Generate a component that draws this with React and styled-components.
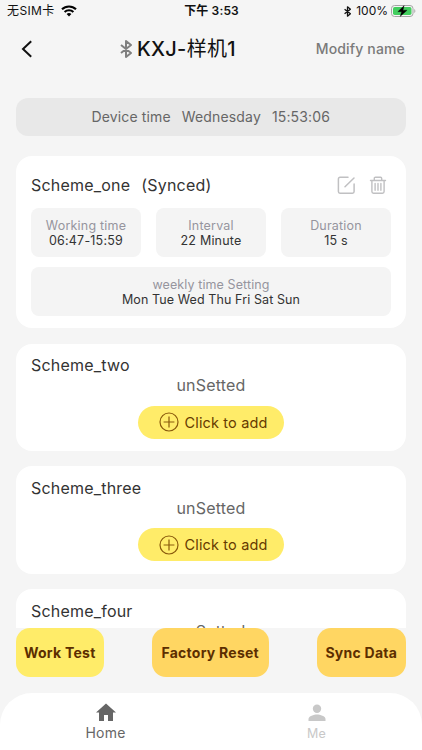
import styled, { createGlobalStyle } from 'styled-components';

const GlobalStyle = createGlobalStyle`
  * {
    box-sizing: border-box;
  }

  body {
    margin: 0;
    background: #f5f5f5;
    font-family: Inter, 'Noto Sans CJK SC', sans-serif;
  }

  button {
    font-family: inherit;
    border: 0;
    padding: 0;
    background: none;
  }
`;

const Screen = styled.div`
  display: flex;
  flex-direction: column;
  width: 422px;
  height: 750px;
  overflow: hidden;
  background: #f5f5f5;
`;

const StatusBar = styled.div`
  display: grid;
  grid-template-columns: 1fr auto 1fr;
  align-items: center;
  height: 22px;
  padding: 0 6px 0 7px;
  font-size: 12px;
  line-height: 22px;
  color: #111;
`;

const StatusGroup = styled.div`
  display: flex;
  align-items: center;
  justify-content: ${({ $end }) => ($end ? 'flex-end' : 'flex-start')};
  gap: ${({ $end }) => ($end ? '3px' : '6px')};
  letter-spacing: ${({ $end }) => ($end ? '0' : '0.4px')};

  svg:first-child {
    margin-right: 2px;
  }
`;

const Clock = styled.div`
  font-weight: 600;
  letter-spacing: 0.15px;
`;

const Header = styled.header`
  display: flex;
  align-items: center;
  justify-content: space-between;
  height: 54px;
  padding: 0 17px 0 20px;
`;

const BackButton = styled.button`
  display: flex;
  width: 20px;
`;

const DeviceName = styled.h1`
  display: flex;
  align-items: center;
  gap: 5px;
  margin: 0;
  font-size: 20px;
  font-weight: 500;
  line-height: 24px;
  letter-spacing: 0.3px;
  color: #111;
`;

const Regular = styled.span`
  font-weight: 400;
`;

const ModifyButton = styled.button`
  padding-bottom: 2px;
  font-size: 14px;
  font-weight: 500;
  letter-spacing: 0.15px;
  color: #7a7a7a;
`;

const DeviceTime = styled.div`
  display: flex;
  justify-content: center;
  align-items: center;
  gap: 11px;
  flex: none;
  height: 38px;
  margin: 22px 16px 20px 15.5px;
  padding-bottom: 2px;
  border-radius: 12px;
  background: #e8e8e8;
  font-size: 14px;
  letter-spacing: 0.15px;
  color: #666;
`;

const SchemeList = styled.main`
  display: flex;
  flex-direction: column;
  gap: 15.5px;
  height: 472px;
  flex: none;
  padding: 0 16px 0 15.5px;
  overflow: hidden;
`;

const Card = styled.section`
  flex: none;
  height: ${({ $synced }) => ($synced ? '172px' : '107.3px')};
  padding: ${({ $synced }) => ($synced ? '18px' : '10.5px')} 15px 0 15.5px;
  border-radius: 16px;
  background: #fff;
`;

const CardHead = styled.div`
  display: flex;
  align-items: center;
  justify-content: space-between;
  height: 22px;
`;

const SchemeName = styled.h2`
  display: flex;
  gap: 11px;
  margin: 0;
  font-size: 16px;
  font-weight: 400;
  line-height: 22px;
  letter-spacing: 0.2px;
  color: #333;
`;

const CardActions = styled.div`
  display: flex;
  gap: 13px;
  margin-right: 4px;
`;

const Stats = styled.div`
  display: grid;
  grid-template-columns: repeat(3, 1fr);
  gap: 10px 15px;
  margin-top: 12px;
`;

const Stat = styled.div`
  grid-column: ${({ $wide }) => ($wide ? '1 / -1' : 'auto')};
  height: 49px;
  padding-top: 9.5px;
  border-radius: 8px;
  background: #f4f4f4;
  text-align: center;
  font-size: 12.5px;
  line-height: 15.3px;
  letter-spacing: ${({ $wide }) => ($wide ? '0.1px' : '0.2px')};
`;

const StatLabel = styled.div`
  color: #96959e;
`;

const StatValue = styled.div`
  color: #333;
`;

const Unset = styled.div`
  height: 20px;
  text-align: center;
  font-size: 16px;
  line-height: 19px;
  letter-spacing: 0.2px;
  color: #666;
`;

const AddButton = styled.button`
  display: flex;
  align-items: center;
  justify-content: center;
  gap: 5px;
  width: 146px;
  height: 33px;
  margin: 9.5px auto 0;
  padding-left: 5px;
  border-radius: 17px;
  background: #ffec69;
  font-size: 14.5px;
  letter-spacing: 0.15px;
  color: #663a00;
`;

const Actions = styled.div`
  display: flex;
  justify-content: space-between;
  flex: none;
  height: 65px;
  padding: 0 16px 0 15.5px;
`;

const ActionButton = styled.button`
  width: ${({ $width }) => $width}px;
  height: 48.5px;
  border-radius: 14px;
  background: ${({ $light }) => ($light ? '#ffec69' : '#ffd662')};
  font-size: 14px;
  font-weight: 700;
  letter-spacing: 0.25px;
  color: #5c2e00;
`;

const TabBar = styled.nav`
  display: grid;
  grid-template-columns: 1fr 1fr;
  flex: 1;
  border-radius: 32px 32px 0 0;
  background: #fff;
`;

const Tab = styled.a`
  display: flex;
  flex-direction: column;
  align-items: center;
  padding-top: 7px;
  font-size: ${({ $active }) => ($active ? '14px' : '12.5px')};
  line-height: 17px;
  letter-spacing: 0.2px;
  color: ${({ $active }) => ($active ? '#666' : '#c8c8c8')};

  svg {
    margin-bottom: ${({ $active }) => ($active ? '0' : '1px')};
  }
`;

function BluetoothIcon({ width, height, color, strokeWidth }) {
  return (
    <svg width={width} height={height} viewBox="0 0 12 18" fill="none" stroke={color} strokeWidth={strokeWidth}>
      <path d="M1 5l10 8-5 4V1l5 4-10 8" strokeLinejoin="round" />
    </svg>
  );
}

function WifiIcon() {
  return (
    <svg width="16" height="12" viewBox="0 0 16 12" fill="none" stroke="#000" strokeWidth="2.1">
      <path d="M1 4.3a10 10 0 0 1 14 0M3.6 7a6.3 6.3 0 0 1 8.8 0" />
      <path d="M8 11.6L5.6 9.1a3.5 3.5 0 0 1 4.8 0z" fill="#000" stroke="none" />
    </svg>
  );
}

function BatteryIcon() {
  return (
    <svg width="25" height="12" viewBox="0 0 25 12">
      <rect x=".5" y=".5" width="21.5" height="11" rx="3" fill="none" stroke="#a5a5a5" />
      <rect x="2" y="2" width="18.5" height="8" rx="1.7" fill="#43ce5f" />
      <path d="M23.3 4v4c1.4-.5 1.4-3.5 0-4z" fill="#a5a5a5" />
      <path d="M13.2.5L6.8 6.7h3.8L9.2 11.5l6.900-6.300H12z" fill="#000" stroke="#000" strokeWidth=".3" />
    </svg>
  );
}

function EditIcon() {
  return (
    <svg width="19" height="19" viewBox="0 0 19 19" fill="none" stroke="#c0c0c2" strokeWidth="1.5" strokeLinecap="round">
      <path d="M11 1.3H3a1.6 1.6 0 0 0-1.6 1.6v12.700A1.600 1.600 0 0 0 3 17.200h12.500a1.600 1.600 0 0 0 1.600-1.600V8M8 10.800l9-8.800" />
    </svg>
  );
}

function TrashIcon() {
  return (
    <svg width="18" height="19" viewBox="0 0 18 19" fill="none" stroke="#c0c0c2" strokeWidth="1.4" strokeLinecap="round">
      <path d="M1.500 4.500h15M5.300 4.300V2.400c0-.7.4-1.100 1.100-1.100h5.200c.7 0 1.100.4 1.100 1.100v1.900M2.900 4.700v10.900c0 1 .6 1.600 1.600 1.600h9c1 0 1.600-.6 1.600-1.600V4.700M6.100 7.500v6.800M9 7.500v6.800M11.900 7.500v6.800" />
    </svg>
  );
}

function PlusIcon() {
  return (
    <svg width="20" height="20" viewBox="0 0 20 20" fill="none" stroke="#8a5a0c" strokeWidth="1.2">
      <circle cx="10" cy="10" r="9" />
      <path d="M10 4.6v10.8M4.6 10h10.8" />
    </svg>
  );
}

const stats = [
  { label: 'Working time', value: '06:47-15:59' },
  { label: 'Interval', value: '22 Minute' },
  { label: 'Duration', value: '15 s' },
  { label: 'weekly time Setting', value: 'Mon Tue Wed Thu Fri Sat Sun', wide: true },
];

const emptySchemes = [
  { name: 'Scheme_two', canAdd: true },
  { name: 'Scheme_three', canAdd: true },
  { name: 'Scheme_four', canAdd: false },
];

function EmptyScheme({ name, canAdd }) {
  return (
    <Card>
      <CardHead>
        <SchemeName>{name}</SchemeName>
      </CardHead>
      <Unset>unSetted</Unset>
      {canAdd && (
        <AddButton>
          <PlusIcon />
          Click to add
        </AddButton>
      )}
    </Card>
  );
}

function App() {
  return (
    <>
      <GlobalStyle />
      <Screen>
        <StatusBar>
          <StatusGroup>
            <span>无SIM卡</span>
            <WifiIcon />
          </StatusGroup>
          <Clock>下午 3:53</Clock>
          <StatusGroup $end>
            <BluetoothIcon width={7} height={11} color="#111" strokeWidth={2.2} />
            <span>100%</span>
            <BatteryIcon />
          </StatusGroup>
        </StatusBar>
        <Header>
          <BackButton aria-label="Back">
            <svg width="14" height="18" viewBox="0 0 14 18" fill="none" stroke="#111" strokeWidth="2">
              <path d="M11.2 1.2L3 9l8.2 7.8" />
            </svg>
          </BackButton>
          <DeviceName>
            <BluetoothIcon width={12} height={18} color="#808080" strokeWidth={2} />
            <span>
              KXJ-<Regular>样机</Regular>1
            </span>
          </DeviceName>
          <ModifyButton>Modify name</ModifyButton>
        </Header>
        <DeviceTime>
          <span>Device time</span>
          <span>Wednesday</span>
          <span>15:53:06</span>
        </DeviceTime>
        <SchemeList>
          <Card $synced>
            <CardHead>
              <SchemeName>
                <span>Scheme_one</span>
                <span>(Synced)</span>
              </SchemeName>
              <CardActions>
                <EditIcon />
                <TrashIcon />
              </CardActions>
            </CardHead>
            <Stats>
              {stats.map(({ label, value, wide }) => (
                <Stat key={label} $wide={wide}>
                  <StatLabel>{label}</StatLabel>
                  <StatValue>{value}</StatValue>
                </Stat>
              ))}
            </Stats>
          </Card>
          {emptySchemes.map((scheme) => (
            <EmptyScheme key={scheme.name} {...scheme} />
          ))}
        </SchemeList>
        <Actions>
          <ActionButton $width={88.5} $light>Work Test</ActionButton>
          <ActionButton $width={116.5}>Factory Reset</ActionButton>
          <ActionButton $width={89.5}>Sync Data</ActionButton>
        </Actions>
        <TabBar>
          <Tab $active>
            <svg width="24" height="24" viewBox="0 0 24 24" fill="currentColor">
              <path d="M12 3.4L2 12.5h3V21h5v-6h4v6h5v-8.500h3z" />
            </svg>
            Home
          </Tab>
          <Tab>
            <svg width="24" height="24" viewBox="0 0 24 24" fill="currentColor">
              <circle cx="12" cy="8.7" r="4.2" />
              <path d="M3.5 21v-2c0-3 5.500-4.600 8.500-4.600s8.500 1.600 8.500 4.600v2z" />
            </svg>
            Me
          </Tab>
        </TabBar>
      </Screen>
    </>
  );
}

export default App;
